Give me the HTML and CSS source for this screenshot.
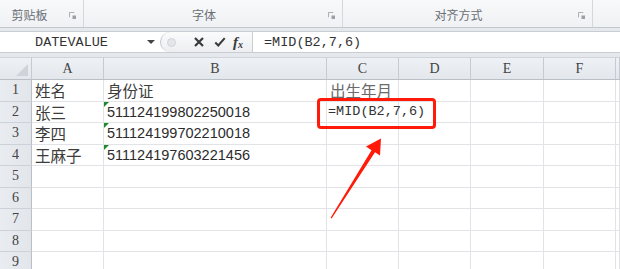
FILE: index.html
```html
<!DOCTYPE html>
<html lang="zh-CN">
<head>
  <meta charset="UTF-8">
  <meta name="viewport" content="width=device-width, initial-scale=1.0">
  <title>MID 函数</title>
  <link rel="stylesheet" href="styles.css">
</head>
<body>
  <div class="ribbon">
    <div class="group g-clip">
      <span class="group-label">剪贴板</span>
      <svg class="launcher" viewBox="0 0 8 8"><path d="M0.5 6V0.5H6" fill="none" stroke="#9aa0a8"/><rect x="4" y="4" width="4" height="4" fill="#9aa0a8"/></svg>
    </div>
    <div class="group g-font">
      <span class="group-label">字体</span>
      <svg class="launcher" viewBox="0 0 8 8"><path d="M0.5 6V0.5H6" fill="none" stroke="#9aa0a8"/><rect x="4" y="4" width="4" height="4" fill="#9aa0a8"/></svg>
    </div>
    <div class="group g-align">
      <span class="group-label">对齐方式</span>
      <svg class="launcher" viewBox="0 0 8 8"><path d="M0.5 6V0.5H6" fill="none" stroke="#9aa0a8"/><rect x="4" y="4" width="4" height="4" fill="#9aa0a8"/></svg>
    </div>
    <div class="group g-rest"></div>
  </div>

  <div class="formula-wrap">
    <div class="formula-bar">
      <div class="name-box">
        <span class="name-text">DATEVALUE</span>
        <span class="name-arrow"></span>
      </div>
      <div class="fx-tools">
        <span class="dot"></span>
        <svg class="tool" viewBox="0 0 12 12"><path d="M2 2L10 10M10 2L2 10" stroke="#3a3a3a" stroke-width="2.2" fill="none"/></svg>
        <svg class="tool" viewBox="0 0 14 12"><path d="M1.5 6.5L5 10L12.5 1.5" stroke="#3a3a3a" stroke-width="2.4" fill="none"/></svg>
        <span class="fx">f<sub>x</sub></span>
      </div>
      <div class="formula-input">=MID(B2,7,6)</div>
    </div>
  </div>

  <div class="sheet">
    <div class="grid">
      <div class="hd corner"></div>
      <div class="hd">A</div>
      <div class="hd">B</div>
      <div class="hd">C</div>
      <div class="hd">D</div>
      <div class="hd">E</div>
      <div class="hd">F</div>
      <div class="hd"></div>

      <div class="rh">1</div>
      <div class="c cjk">姓名</div>
      <div class="c cjk">身份证</div>
      <div class="c cjk light">出生年月</div>
      <div class="c"></div><div class="c"></div><div class="c"></div><div class="c"></div>

      <div class="rh">2</div>
      <div class="c cjk">张三</div>
      <div class="c num flag">511124199802250018</div>
      <div class="c mono">=MID(B2,7,6)</div>
      <div class="c"></div><div class="c"></div><div class="c"></div><div class="c"></div>

      <div class="rh">3</div>
      <div class="c cjk">李四</div>
      <div class="c num flag">511124199702210018</div>
      <div class="c"></div>
      <div class="c"></div><div class="c"></div><div class="c"></div><div class="c"></div>

      <div class="rh">4</div>
      <div class="c cjk">王麻子</div>
      <div class="c num flag">511124197603221456</div>
      <div class="c"></div>
      <div class="c"></div><div class="c"></div><div class="c"></div><div class="c"></div>

      <div class="rh">5</div>
      <div class="c"></div><div class="c"></div><div class="c"></div><div class="c"></div><div class="c"></div><div class="c"></div><div class="c"></div>
      <div class="rh">6</div>
      <div class="c"></div><div class="c"></div><div class="c"></div><div class="c"></div><div class="c"></div><div class="c"></div><div class="c"></div>
      <div class="rh">7</div>
      <div class="c"></div><div class="c"></div><div class="c"></div><div class="c"></div><div class="c"></div><div class="c"></div><div class="c"></div>
      <div class="rh">8</div>
      <div class="c"></div><div class="c"></div><div class="c"></div><div class="c"></div><div class="c"></div><div class="c"></div><div class="c"></div>
      <div class="rh">9</div>
      <div class="c"></div><div class="c"></div><div class="c"></div><div class="c"></div><div class="c"></div><div class="c"></div><div class="c"></div>
    </div>

    <!-- callout drawn over the sheet -->
    <div class="highlight"></div>
    <svg class="arrow" viewBox="0 0 620 211" width="620" height="211">
      <polygon points="330.6,159.8 371.5,92.2 366,88.5 381,80.5 380,97.5 375,94.2 331.6,160.4" fill="#ff1a0a"/>
    </svg>
  </div>
</body>
</html>
```

FILE: styles.css
```css
body {
  margin: 0;
  width: 620px;
  height: 269px;
  overflow: hidden;
  background-color: #fff;
  font-family: "Liberation Sans", Arial, sans-serif;
  color: #333;
}

/* ribbon group captions */
.ribbon {
  display: flex;
  height: 28px;
  box-sizing: border-box;
  background: linear-gradient(#f8f9fa, #eff1f4);
  border-bottom: 1px solid #c3c7cd;
}

.group {
  display: flex;
  align-items: flex-end;
  box-sizing: border-box;
  border-right: 1px solid #d4d7db;
  padding-bottom: 5px;
}

.g-clip { width: 84px; }
.g-font { width: 259px; }
.g-align { width: 250px; }
.g-rest { flex: 1; border-right: none; }

.group-label {
  flex: 1;
  text-align: center;
  font-family: "Noto Sans CJK SC", sans-serif;
  font-size: 12px;
  line-height: 14px;
  color: #6b6f75;
}

.g-clip .group-label { padding-right: 6px; }

.launcher {
  width: 7px;
  height: 7px;
  margin: 0 7px 3px 4px;
}

/* formula bar */
.formula-wrap {
  background-color: #e5e8ec;
  padding: 3px 0 4px;
  border-bottom: 1px solid #d0d4d9;
}

.formula-bar {
  display: flex;
  height: 22px;
  box-sizing: border-box;
  background-color: #fff;
  border-top: 1px solid #c9cdd2;
  border-bottom: 1px solid #c9cdd2;
}

.name-box {
  width: 160px;
  display: flex;
  align-items: center;
}

.name-text {
  flex: 1;
  text-align: center;
  padding-right: 4px;
  font-family: "Liberation Mono", monospace;
  font-size: 13.5px;
  color: #333;
}

.name-arrow {
  width: 0;
  height: 0;
  margin-right: 5px;
  border-left: 4px solid transparent;
  border-right: 4px solid transparent;
  border-top: 4px solid #444;
}

.fx-tools {
  width: 93px;
  display: flex;
  align-items: center;
  gap: 9px;
  box-sizing: border-box;
  padding-left: 6px;
  background: linear-gradient(#fbfbfc, #eceef1);
  border-left: 1px solid #c2c6cc;
  border-right: 1px solid #c9cdd2;
  border-radius: 10px 0 0 10px;
}

.dot {
  width: 7px;
  height: 7px;
  border-radius: 50%;
  background-color: #e3e5e8;
  border: 1px solid #d2d5d9;
  margin-right: 8px;
}

.tool {
  width: 12px;
  height: 12px;
}

.fx {
  font-family: "Liberation Serif", serif;
  font-style: italic;
  font-weight: bold;
  font-size: 15px;
  color: #3a3a3a;
  margin-left: -2px;
}

.fx sub {
  font-size: 10px;
  vertical-align: -1px;
}

.formula-input {
  flex: 1;
  display: flex;
  align-items: center;
  padding-left: 11px;
  font-family: "Liberation Mono", monospace;
  font-size: 13.5px;
  color: #333;
}

/* worksheet */
.sheet {
  position: relative;
}

.grid {
  display: grid;
  grid-template-columns: 32px 72px 223px 72px 72px 73px 72px 1fr;
  grid-template-rows: 22px;
  grid-auto-rows: 21.5px;
}

.grid > div {
  box-sizing: border-box;
  border-right: 1px solid #e1e3e6;
  border-bottom: 1px solid #e1e3e6;
  display: flex;
  align-items: center;
  white-space: nowrap;
  overflow: hidden;
  line-height: 18px;
}

.grid > .hd {
  justify-content: center;
  background: linear-gradient(#eef1f5, #e3e7ec);
  border-right-color: #c6cbd2;
  border-bottom-color: #b9bfc7;
  font-family: "Liberation Serif", serif;
  font-size: 14px;
  color: #444;
}

.grid > .corner {
  position: relative;
}

.corner::after {
  content: "";
  position: absolute;
  right: 3px;
  bottom: 3px;
  border-left: 12px solid transparent;
  border-bottom: 12px solid #cfd4da;
}

.grid > .rh {
  justify-content: center;
  background: linear-gradient(90deg, #e9ecf0, #e2e6eb);
  border-right-color: #b9bfc7;
  border-bottom-color: #cdd2d8;
  font-family: "Liberation Serif", serif;
  font-size: 14px;
  color: #444;
}

.c {
  padding-left: 3px;
}

.cjk {
  font-family: "Noto Sans CJK SC", sans-serif;
  font-size: 15.5px;
  color: #3c3c3c;
}

.light {
  color: #6a6a6a;
}

.num {
  font-size: 14.5px;
  color: #2c2c2c;
}

/* long formula spills into the next column, as in Excel */
.grid > .mono {
  overflow: visible;
  font-family: "Liberation Mono", monospace;
  font-size: 13.5px;
  color: #333;
  padding-left: 1px;
}

.grid > .flag {
  position: relative;
}

.flag::before {
  content: "";
  position: absolute;
  left: 0;
  top: 0;
  border-top: 5px solid #1e8a2e;
  border-right: 5px solid transparent;
}

.highlight {
  position: absolute;
  left: 317px;
  top: 40px;
  width: 119px;
  height: 31px;
  box-sizing: border-box;
  border: 3px solid #ff1a0a;
  border-radius: 4px;
}

.arrow {
  position: absolute;
  left: 0;
  top: 0;
}
```
